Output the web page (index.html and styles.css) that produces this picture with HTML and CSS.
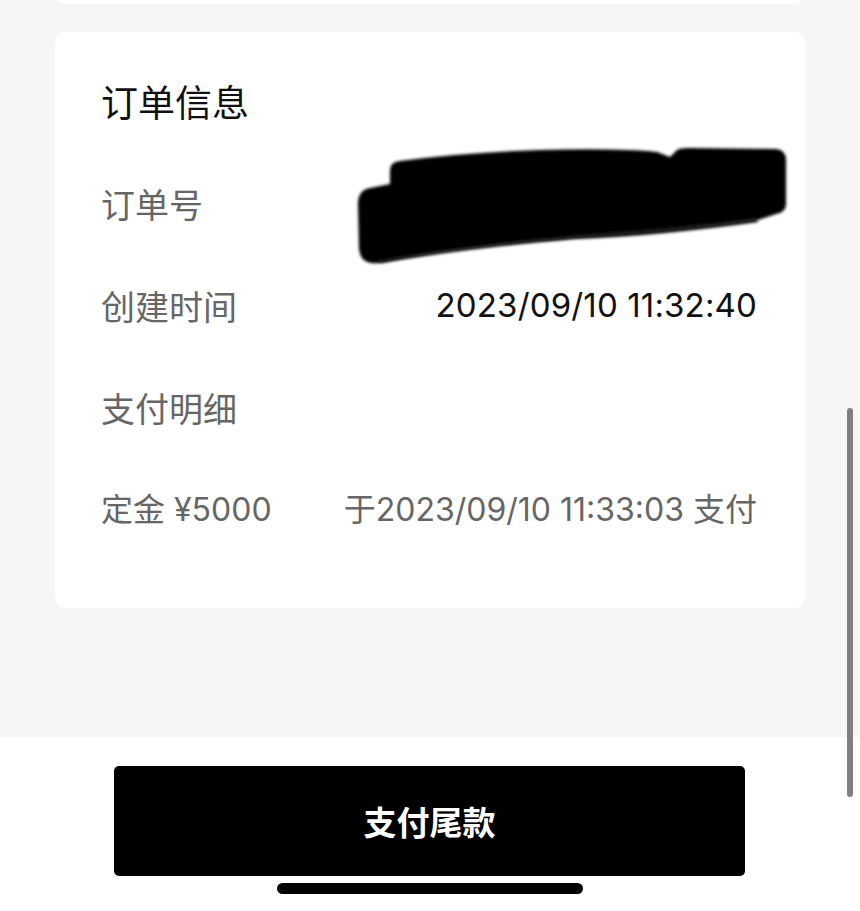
FILE: index.html
```html
<!DOCTYPE html>
<html lang="zh-CN">
<head>
    <meta charset="UTF-8">
    <meta name="viewport" content="width=device-width, initial-scale=1.0">
    <title>订单详情</title>
    <link rel="stylesheet" href="styles.css">
</head>
<body>
    <div class="page">
        <main class="content">
            <!-- bottom edge of the card above, scrolled out of view -->
            <div class="card card-prev"></div>

            <!-- Order info card -->
            <section class="card order-card">
                <h2 class="card-title">订单信息</h2>

                <div class="row">
                    <span class="label">订单号</span>
                    <svg class="redact" width="430" height="117" viewBox="0 0 430 117" aria-hidden="true">
                        <defs>
                            <filter id="soft" x="-5%" y="-10%" width="110%" height="120%">
                                <feGaussianBlur stdDeviation="1.4"/>
                            </filter>
                        </defs>
                        <path filter="url(#soft)" fill="#050505" d="M 12 40 L 32 36 L 32 22 Q 32 14 42 13 Q 110 4 182 2 Q 260 0 299 4 L 312 9 L 319 2 Q 322 0 330 0 L 418 1 Q 428 2 428 12 L 428 56 Q 428 64 418 66 L 400 72 Q 300 86 215 90 Q 100 100 20 115 Q 2 117 1 100 L 0 56 Q 0 42 12 40 Z"/>
                        <path filter="url(#soft)" fill="#141414" d="M 20 112 Q 120 96 230 86 Q 320 80 398 70 L 400 74 Q 300 88 215 91 Q 100 101 22 115 Z"/>
                    </svg>
                </div>

                <div class="row">
                    <span class="label">创建时间</span>
                    <span class="value">2023/09/10 11:32:40</span>
                </div>

                <div class="row">
                    <span class="label">支付明细</span>
                </div>

                <div class="row row-muted">
                    <span class="label">定金 ¥5000</span>
                    <span class="value">于2023/09/10 11:33:03 支付</span>
                </div>
            </section>
        </main>

        <footer class="footer">
            <button class="pay-btn">支付尾款</button>
        </footer>
    </div>

    <!-- system overlays -->
    <div class="scrollbar"></div>
    <div class="home-indicator"></div>
</body>
</html>
```

FILE: styles.css
```css
* {
    margin: 0;
    padding: 0;
    box-sizing: border-box;
}

body {
    font-family: Inter, "Noto Sans CJK SC", sans-serif;
    background: #ffffff;
    color: #111111;
    overflow: hidden;
}

.page {
    height: 100vh;
    display: flex;
    flex-direction: column;
}

.content {
    flex: 1;
    background: #f6f6f6;
    padding: 0 55px;
    display: flex;
    flex-direction: column;
    gap: 28px;
}

.card {
    background: #ffffff;
    border-radius: 10px;
}

.card-prev {
    height: 24px;
    margin-top: -20px;
}

.order-card {
    padding: 18px 48px 52px 46px;
}

.card-title {
    height: 102px;
    display: flex;
    align-items: center;
    font-size: 37px;
    font-weight: 400;
    color: #111111;
}

.row {
    height: 102px;
    display: flex;
    align-items: center;
    justify-content: space-between;
    font-size: 34px;
}

.label {
    color: #666666;
}

.value {
    color: #111111;
    font-size: 33px;
    letter-spacing: 0.15px;
}

.row-muted {
    height: 98px;
    font-size: 32px;
}

.row-muted .value {
    color: #666666;
    font-size: 32px;
    letter-spacing: 0;
}

.redact {
    flex-shrink: 0;
    margin-top: 7px;
    margin-right: -31px;
    overflow: visible;
}

.footer {
    height: 174px;
    padding-top: 29px;
    display: flex;
    justify-content: center;
    align-items: flex-start;
}

.pay-btn {
    width: 631px;
    height: 110px;
    margin-right: 1px;
    background: #000000;
    color: #ffffff;
    border: none;
    border-radius: 5px;
    font-family: "Noto Sans CJK SC", sans-serif;
    font-size: 33px;
    font-weight: 600;
    cursor: pointer;
}

.scrollbar {
    position: fixed;
    left: 847px;
    top: 408px;
    width: 6px;
    height: 389px;
    border-radius: 3px;
    background: #808080;
}

.home-indicator {
    position: fixed;
    left: 277px;
    top: 883px;
    width: 306px;
    height: 11px;
    border-radius: 6px;
    background: #000000;
}
```
